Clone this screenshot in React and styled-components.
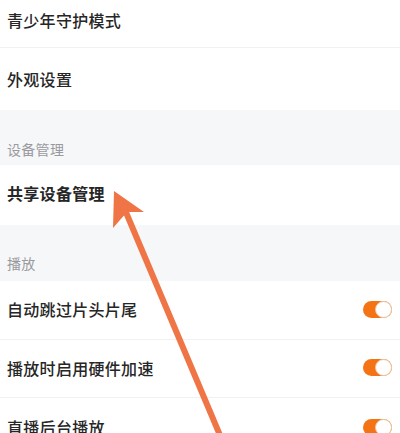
import React from "react";
import styled, { createGlobalStyle } from "styled-components";

const Global = createGlobalStyle`
  html, body { margin: 0; padding: 0; background: #fff; }
  body { font-family: "Noto Sans CJK SC", "Noto Sans", sans-serif; }
`;

const Page = styled.div`
  position: relative;
  width: 400px;
  height: 433px;
  overflow: hidden;
  background: #fff;
`;

const Row = styled.div`
  display: flex;
  align-items: center;
  justify-content: space-between;
  box-sizing: border-box;
  height: ${(p) => p.h}px;
  padding: 0 8px 0 7px;
  padding-bottom: ${(p) => p.pb || 0}px;
  border-bottom: ${(p) => (p.line ? "1px solid #f1f1f3" : "none")};
  background: #fff;
`;

const Label = styled.span`
  font-size: 16px;
  color: #262626;
  font-weight: ${(p) => (p.strong ? 700 : 500)};
  letter-spacing: 0.3px;
`;

const Section = styled.div`
  display: flex;
  align-items: flex-end;
  box-sizing: border-box;
  height: ${(p) => p.h}px;
  padding: 0 7px ${(p) => p.pb}px;
  background: #f6f7f9;
  font-size: 14px;
  color: #9a9a9e;
  letter-spacing: 0.3px;
`;

const Toggle = styled.div`
  position: relative;
  width: 29px;
  height: 17px;
  border-radius: 9px;
  background: #f47415;
  &::after {
    content: "";
    position: absolute;
    right: 0;
    top: 0;
    width: 15px;
    height: 15px;
    border-radius: 50%;
    background: #fff;
    border: 1px solid #e8c9a8;
  }
`;

const Arrow = styled.svg`
  position: absolute;
  left: 0;
  top: 0;
  pointer-events: none;
`;

export default function App() {
  return (
    <Page>
      <Global />
      <Row h={48} pb={8} line>
        <Label>青少年守护模式</Label>
      </Row>
      <Row h={62}>
        <Label>外观设置</Label>
      </Row>
      <Section h={55} pb={6}>设备管理</Section>
      <Row h={60} pb={4}>
        <Label strong>共享设备管理</Label>
      </Row>
      <Section h={56} pb={8}>播放</Section>
      <Row h={59} pb={2} line>
        <Label>自动跳过片头片尾</Label>
        <Toggle />
      </Row>
      <Row h={58} pb={2} line>
        <Label>播放时启用硬件加速</Label>
        <Toggle />
      </Row>
      <Row h={58} pb={0}>
        <Label>直播后台播放</Label>
        <Toggle />
      </Row>
      <Arrow width="400" height="433" viewBox="0 0 400 433">
        <line x1="125" y1="210" x2="222" y2="440" stroke="#ef7446" strokeWidth="6" />
        <polygon points="114,191 144,212 127,212 113,228" fill="#ef7446" />
      </Arrow>
    </Page>
  );
}
